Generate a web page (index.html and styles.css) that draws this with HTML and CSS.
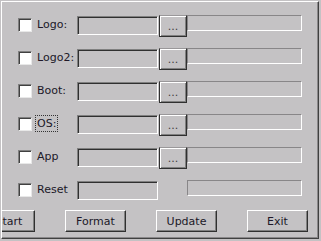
FILE: index.html
```html
<!DOCTYPE html>
<html lang="en">
<head>
    <meta charset="UTF-8">
    <meta name="viewport" content="width=device-width, initial-scale=1.0">
    <title>Update</title>
    <link rel="stylesheet" href="styles.css">
</head>
<body>
    <div class="window">
        <div class="rows">
            <div class="row">
                <span class="check"></span>
                <label class="name">Logo:</label>
                <span class="field"></span>
                <button class="browse">...</button>
                <span class="path"></span>
            </div>
            <div class="row">
                <span class="check"></span>
                <label class="name">Logo2:</label>
                <span class="field"></span>
                <button class="browse">...</button>
                <span class="path"></span>
            </div>
            <div class="row">
                <span class="check"></span>
                <label class="name">Boot:</label>
                <span class="field"></span>
                <button class="browse">...</button>
                <span class="path"></span>
            </div>
            <div class="row">
                <span class="check"></span>
                <label class="name"><span class="focus">OS:</span></label>
                <span class="field"></span>
                <button class="browse">...</button>
                <span class="path"></span>
            </div>
            <div class="row">
                <span class="check"></span>
                <label class="name">App</label>
                <span class="field"></span>
                <button class="browse">...</button>
                <span class="path"></span>
            </div>
            <div class="row">
                <span class="check"></span>
                <label class="name">Reset</label>
                <span class="field"></span>
                <span class="browse-gap"></span>
                <span class="path"></span>
            </div>
        </div>

        <!-- tombol bawah -->
        <div class="actions">
            <button class="btn btn-start">Start</button>
            <button class="btn">Format</button>
            <button class="btn">Update</button>
            <button class="btn">Exit</button>
        </div>
    </div>
</body>
</html>
```

FILE: styles.css
```css
body {
    margin: 0;
    background-color: #c4c2c4;
    font-family: "DejaVu Sans", sans-serif;
    font-size: 11px;
    color: #201828;
}
.window {
    box-sizing: border-box;
    width: 318px;
    height: 238px;
    margin: 1px 0 0 1px;
    padding: 13px 0 0 16px;
    border-top: 1px solid #fff;
    border-left: 1px solid #fff;
    border-right: 1px solid #404040;
    border-bottom: 1px solid #404040;
    box-shadow: inset -1px -1px #8a888a;
    overflow: hidden;
}
.rows {
    display: flex;
    flex-direction: column;
    gap: 11px;
}
.row {
    display: flex;
    align-items: flex-start;
    height: 22px;
}
.check {
    box-sizing: border-box;
    width: 14px;
    height: 14px;
    margin-top: 3px;
    margin-right: 5px;
    background-color: #fff;
    border-top: 1px solid #808080;
    border-left: 1px solid #808080;
    border-right: 1px solid #e8e8e8;
    border-bottom: 1px solid #e8e8e8;
    box-shadow: inset 1px 1px #404040;
}
.name {
    width: 40px;
    margin-top: 3px;
    line-height: 14px;
    white-space: nowrap;
}
.focus {
    outline: 1px dotted #333;
    outline-offset: 1px;
}
.field {
    box-sizing: border-box;
    width: 81px;
    height: 19px;
    margin-top: 1px;
    border-top: 1px solid #808080;
    border-left: 1px solid #808080;
    border-right: 1px solid #fff;
    border-bottom: 1px solid #fff;
    box-shadow: inset 1px 1px #303030;
}
.browse {
    box-sizing: border-box;
    width: 28px;
    height: 22px;
    margin-left: 1px;
    padding: 0;
    background-color: #c4c2c4;
    font-family: inherit;
    font-size: 11px;
    color: #404040;
    border: 1px solid #303030;
    border-top-color: #9a989a;
    box-shadow: inset 1px 1px #fff, inset -1px -1px #808080;
}
.browse-gap {
    width: 28px;
    margin-left: 1px;
}
.path {
    box-sizing: border-box;
    width: 115px;
    height: 16px;
    border-top: 1px solid #888688;
    border-left: 1px solid #888688;
    border-right: 1px solid #fff;
    border-bottom: 1px solid #fff;
}
.actions {
    display: flex;
    gap: 30px;
    margin-top: 8px;
    margin-left: -44px;
}
.btn {
    box-sizing: border-box;
    flex: none;
    width: 61px;
    height: 22px;
    padding: 0;
    background-color: #c4c2c4;
    font-family: inherit;
    font-size: 11px;
    color: #201828;
    border: 1px solid #303030;
    border-top-color: #fff;
    border-left-color: #fff;
    box-shadow: inset -1px -1px #808080;
}
.btn-start {
    padding-left: 9px;
}
```
